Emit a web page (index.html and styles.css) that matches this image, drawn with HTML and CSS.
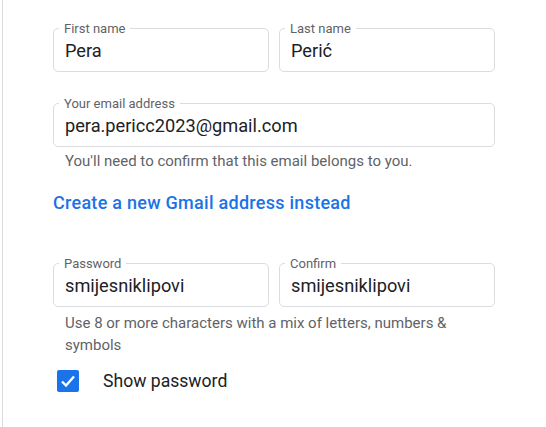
FILE: index.html
```html
<!DOCTYPE html>
<html>
<head>
<meta charset="utf-8">
<link rel="stylesheet" href="styles.css">
</head>
<body>
<div class="page">
  <div class="row">
    <div class="field"><span class="label">First name</span><span class="value">Pera</span></div>
    <div class="field"><span class="label">Last name</span><span class="value">Perić</span></div>
  </div>
  <div class="field email"><span class="label">Your email address</span><span class="value">pera.pericc2023@gmail.com</span></div>
  <p class="help one">You'll need to confirm that this email belongs to you.</p>
  <a class="link" href="#">Create a new Gmail address instead</a>
  <div class="row pw">
    <div class="field"><span class="label">Password</span><span class="value">smijesniklipovi</span></div>
    <div class="field"><span class="label">Confirm</span><span class="value">smijesniklipovi</span></div>
  </div>
  <p class="help two">Use 8 or more characters with a mix of letters, numbers &amp; symbols</p>
  <div class="check-row">
    <span class="box"><svg width="22" height="22" viewBox="0 0 22 22"><path d="M5 11.5 L9 15.5 L17 6.5" fill="none" stroke="#fff" stroke-width="2.4"/></svg></span>
    <span class="check-label">Show password</span>
  </div>
</div>
</body>
</html>
```
FILE: styles.css
```css
html, body { margin: 0; padding: 0; background: #fff; }
body { font-family: Roboto, "Noto Sans", Arial, sans-serif; color: #202124; }
.page {
  margin-left: 2px;
  border-left: 1px solid #dadce0;
  padding: 28px 0 0 50px;
  width: 442px;
  height: 399px;
}
.row { display: grid; grid-template-columns: 216px 216px; gap: 10px; }
.field {
  position: relative;
  height: 42px;
  border: 1px solid #dadce0;
  border-radius: 5px;
  display: flex;
  align-items: center;
  padding-left: 11px;
}
.label {
  position: absolute;
  top: -8px;
  left: 5px;
  padding: 0 5px;
  background: #fff;
  font-size: 13px;
  line-height: 16px;
  color: #5f6368;
}
.value { font-size: 18.2px; line-height: 24px; color: #202124; padding-top: 1px; }
.email { margin-top: 31px; }
.help { margin: 0; padding-left: 12px; font-size: 15px; line-height: 22px; color: #5f6368; }
.help.one { margin-top: 3px; }
.link {
  display: block;
  margin-top: 19px;
  font-size: 18px;
  line-height: 24px;
  font-weight: 500;
  color: #1a73e8;
  text-decoration: none;
  letter-spacing: 0.27px;
}
.pw { margin-top: 48px; }
.help.two { margin-top: 5px; }
.check-row { display: flex; align-items: center; margin-top: 13px; padding-left: 4px; }
.box {
  width: 22px; height: 22px; background: #1a73e8; border-radius: 2px;
  display: flex;
}
.check-label { margin-left: 24px; font-size: 17.6px; line-height: 24px; color: #202124; }
```
